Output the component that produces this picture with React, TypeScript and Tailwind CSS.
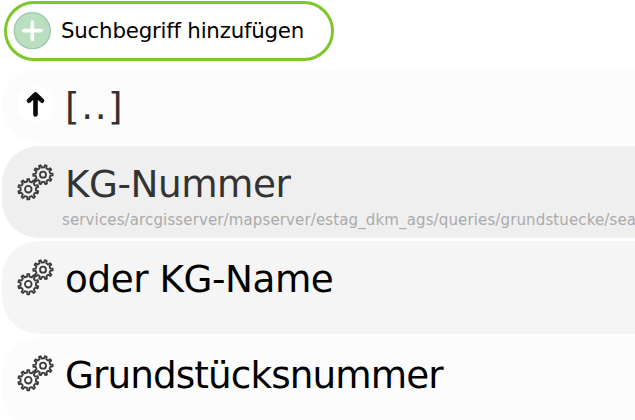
import type { ReactNode } from "react";

function gearPath(cx: number, cy: number, outer: number, inner: number, teeth: number, turn: number) {
  const step = (Math.PI * 2) / teeth;
  const points: string[] = [];
  for (let i = 0; i < teeth; i++) {
    const a = i * step + turn;
    const corners: [number, number][] = [
      [inner, a - step * 0.25],
      [outer, a - step * 0.15],
      [outer, a + step * 0.15],
      [inner, a + step * 0.25],
    ];
    for (const [r, t] of corners) {
      points.push(`${(cx + r * Math.cos(t)).toFixed(2)} ${(cy + r * Math.sin(t)).toFixed(2)}`);
    }
  }
  return `M${points.join("L")}Z`;
}

const bigGear = gearPath(11.3, 26.2, 10.2, 7.7, 10, -Math.PI / 2);
const smallGear = gearPath(26, 11.7, 9.7, 7.3, 10, -Math.PI / 2 + 0.3);

function Gears() {
  return (
    <svg className="block h-[38px] w-[38px]" viewBox="0 0 38 38" fill="none" stroke="#3a3a3a" strokeWidth="1.8" strokeLinejoin="round">
      <path d={smallGear} />
      <circle cx="26" cy="11.7" r="3" />
      <path d={bigGear} />
      <circle cx="11.3" cy="26.2" r="3.3" />
    </svg>
  );
}

function UpArrow() {
  return (
    <svg className="block h-[38px] w-[38px]" viewBox="0 0 38 38" fill="none" stroke="#080808" strokeWidth="4.6" strokeLinecap="round" strokeLinejoin="round">
      <circle cx="18.5" cy="19" r="18.5" fill="#fff" stroke="none" />
      <path d="M18.5 29.5V9.5M12 15.7L18.5 9.5L25 15.7" />
    </svg>
  );
}

function Row({ className, icon, title, titleClass, detail }: { className: string; icon: ReactNode; title: string; titleClass: string; detail?: string }) {
  return (
    <li className={`ml-0.5 flex w-[700px] shrink-0 rounded-l-[37px] pl-[15px] ${className}`}>
      <div className="w-[48px] shrink-0 pt-[17px]">{icon}</div>
      <div className="pt-4 whitespace-nowrap">
        <div className={`h-[44px] text-[37.33px] leading-[44px] ${titleClass}`}>{title}</div>
        {detail && <div className="-ml-[3px] pt-[5px] text-[15px] leading-[18px] tracking-[0.13px] text-[#aaa]">{detail}</div>}
      </div>
    </li>
  );
}

export default function App() {
  return (
    <main className="h-[420px] w-[635px] overflow-hidden bg-white pt-px font-['Verdana','DejaVu_Sans',sans-serif]">
      <button className="ml-1 flex h-[60px] w-[330px] items-center rounded-[30px] border-[3px] border-[#7dc828] pl-[6px] text-[21.33px] text-black">
        <svg className="block h-[39px] w-[39px] shrink-0" viewBox="0 0 39 39">
          <circle cx="19.3" cy="18.7" r="18" fill="#b9dfbf" stroke="#9bc9ae" strokeWidth="1.3" />
          <path d="M19.3 10.2V27.2M10.8 18.7H27.8" stroke="#fff" strokeWidth="3.8" strokeLinecap="round" />
        </svg>
        <span className="ml-[9px] tracking-[-0.22px] whitespace-nowrap">Suchbegriff hinzufügen</span>
      </button>
      <ul className="mt-[7px] flex flex-col">
        <Row className="h-[75px] bg-[#fcfcfc]" icon={<UpArrow />} title="[..]" titleClass="text-[#333] tracking-[1.6px]" />
        <Row className="mt-[3px] h-[92px] bg-[#efefef]" icon={<Gears />} title="KG-Nummer" titleClass="text-[#333] tracking-[-0.45px]" detail="services/arcgisserver/mapserver/estag_dkm_ags/queries/grundstuecke/sea" />
        <Row className="mt-[3px] h-[93px] bg-[#f5f5f5]" icon={<Gears />} title="oder KG-Name" titleClass="text-black tracking-[-0.45px]" />
        <Row className="mt-[3px] h-[93px] bg-[#fcfcfc]" icon={<Gears />} title="Grundstücksnummer" titleClass="text-black tracking-[-0.9px]" />
      </ul>
    </main>
  );
}
